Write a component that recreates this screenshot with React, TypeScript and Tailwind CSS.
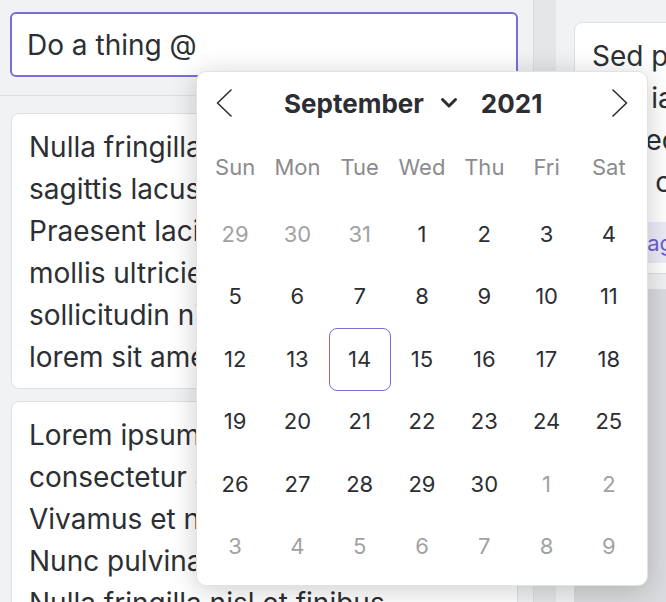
const weekdays = ["Sun", "Mon", "Tue", "Wed", "Thu", "Fri", "Sat"];

type Day = { n: number; muted?: boolean };

const days: Day[] = [
  { n: 29, muted: true },
  { n: 30, muted: true },
  { n: 31, muted: true },
  ...Array.from({ length: 30 }, (_, i) => ({ n: i + 1 })),
  { n: 1, muted: true },
  { n: 2, muted: true },
  ...Array.from({ length: 7 }, (_, i) => ({ n: i + 3, muted: true })),
];

const leftCards = [
  [
    "Nulla fringilla lectus a nisi",
    "sagittis lacus vel porta nunc.",
    "Praesent lacinia ante vitae",
    "mollis ultricies. Morbi in",
    "sollicitudin nibh. Integer",
    "lorem sit amet tellus.",
  ],
  [
    "Lorem ipsum dolor sit amet,",
    "consectetur adipiscing elit.",
    "Vivamus et nunc ac magna",
    "Nunc pulvinar quam at metus",
    "Nulla fringilla nisl et finibus",
  ],
];

const Chevron = ({ dir }: { dir: "left" | "right" }) => (
  <svg width="16" height="28" viewBox="0 0 16 28" fill="none" aria-hidden="true">
    <polyline
      points={dir === "left" ? "15,1 1.5,14 15,27" : "1,1 14.5,14 1,27"}
      stroke="currentColor"
      strokeWidth="1.6"
      strokeLinecap="round"
      strokeLinejoin="round"
    />
  </svg>
);

const CaretDown = () => (
  <svg width="18" height="12" viewBox="0 0 18 12" fill="none" aria-hidden="true">
    <polyline
      points="2.5,2.5 9,9 15.5,2.5"
      stroke="currentColor"
      strokeWidth="3"
      strokeLinecap="round"
      strokeLinejoin="round"
    />
  </svg>
);

function Card({ lines }: { lines: string[] }) {
  return (
    <div className="rounded-[8px] border border-[#dedfe2] bg-white px-[17px] pb-[10px] pt-[12px] text-[28px] leading-[42px] text-[#2c2f33]">
      {lines.map((l) => (
        <p key={l} className="whitespace-nowrap">
          {l}
        </p>
      ))}
    </div>
  );
}

function DatePicker() {
  return (
    <div className="absolute left-[196px] top-[71px] h-[515px] w-[452px] rounded-[10px] border border-[#e1e2e5] bg-white px-[7px] shadow-[0_4px_28px_rgba(0,0,0,0.2)]">
      <div className="flex h-[62px] items-center pl-[12px] pr-[12px] text-[#2c2e33]">
        <Chevron dir="left" />
        <span className="ml-[52px] text-[26px] font-bold">September</span>
        <span className="ml-[16px] flex">
          <CaretDown />
        </span>
        <span className="ml-[23px] text-[26px] font-bold">2021</span>
        <span className="ml-auto flex">
          <Chevron dir="right" />
        </span>
      </div>
      <div className="mt-[13px] grid h-[40px] grid-cols-7 items-center text-center text-[22px] text-[#8b8b8d]">
        {weekdays.map((d) => (
          <span key={d}>{d}</span>
        ))}
      </div>
      <div className="mt-[16px] grid grid-cols-7 grid-rows-6 text-[22px]">
        {days.map((d, i) => (
          <div
            key={i}
            className={
              d.n === 14 && !d.muted
                ? "flex h-[62.5px] items-center justify-center rounded-[8px] border-[1.5px] border-[#7a6fd8] text-[#2c2e33]"
                : d.muted
                  ? "flex h-[62.5px] items-center justify-center text-[#a2a2a4]"
                  : "flex h-[62.5px] items-center justify-center text-[#2c2e33]"
            }
          >
            {d.n}
          </div>
        ))}
      </div>
    </div>
  );
}

export default function App() {
  return (
    <div className="relative flex h-[602px] w-[666px] overflow-hidden bg-[#f1f2f4] font-['Inter','Liberation_Sans',sans-serif]">
      <section className="w-[534px] shrink-0 border-r border-[#dcdde1]">
        <div className="h-[96px] border-b border-[#dfe0e3] px-[10px] pt-[12px]">
          <div className="flex h-[65px] w-[508px] items-center rounded-[6px] border-2 border-[#7a6fd8] bg-white pl-[15px] text-[28px] text-[#2c2f33]">
            Do a thing @
          </div>
        </div>
        <div className="flex w-[518px] flex-col gap-[12px] pl-[11px] pt-[17px]">
          {leftCards.map((c, i) => (
            <Card key={i} lines={c} />
          ))}
        </div>
      </section>
      <div className="w-[22px] shrink-0 bg-[#e5e6e9]" />
      <section className="flex min-w-0 flex-1 flex-col pl-[18px] pt-[22px]">
        <div className="w-[300px] shrink-0 rounded-[8px] border border-[#dedfe2] bg-white pb-[10px] pl-[17px] pt-[12px] text-[28px] leading-[42px] text-[#2c2f33]">
          <p className="whitespace-nowrap">Sed posuere lorem</p>
          <p className="whitespace-nowrap">Sed iaculis mi</p>
          <p className="whitespace-nowrap">Donec vitae</p>
          <p className="whitespace-nowrap">quis congue</p>
          <div className="mt-[19px] flex h-[41px] items-center whitespace-nowrap rounded-[6px] bg-[#ecebf8] px-[10px] text-[22px] text-[#6b5fd3]">
            Manage tasks
          </div>
        </div>
        <div className="mt-[15px] flex-1 bg-[#dadbde]" />
      </section>
      <DatePicker />
    </div>
  );
}
